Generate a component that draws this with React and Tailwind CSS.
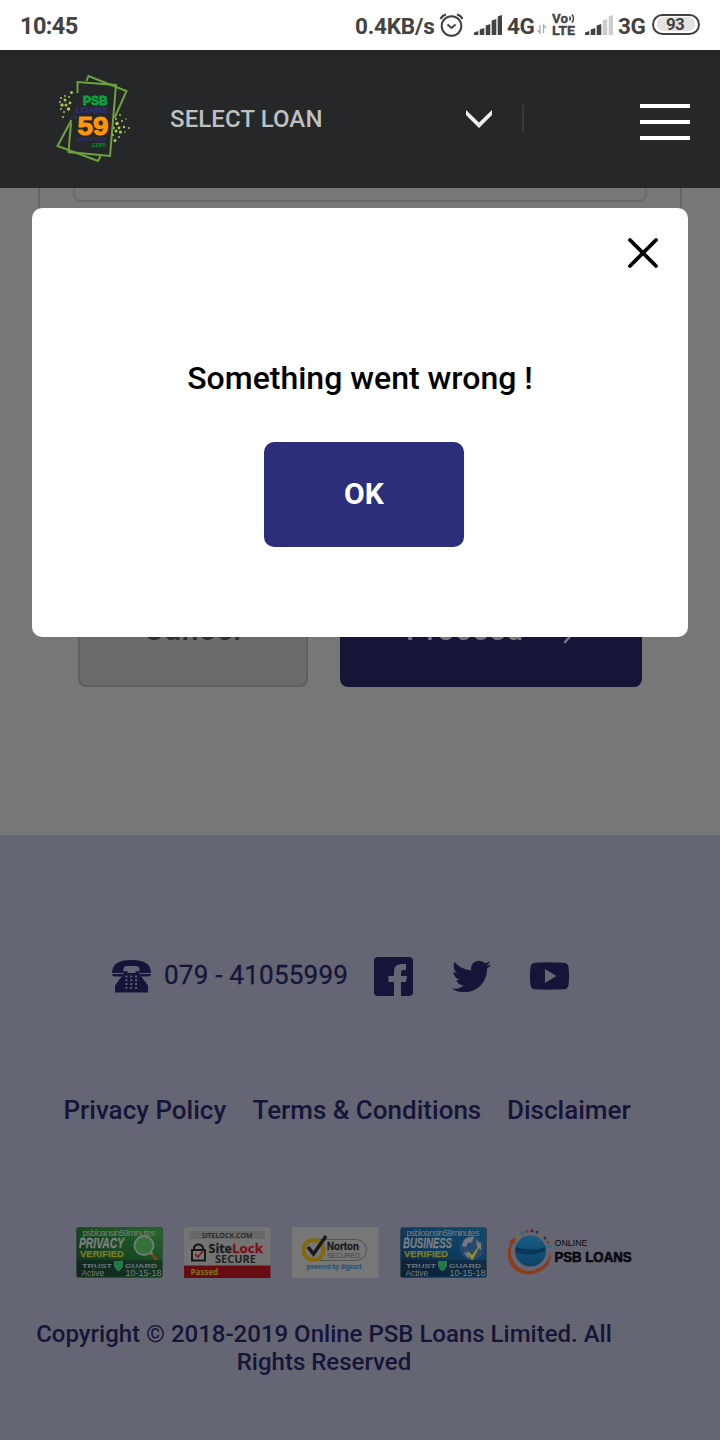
import React from "react";
import { FaTwitter } from "react-icons/fa";

const ROBOTO = "Roboto, 'Liberation Sans', sans-serif";

function Signal({ faded = 0 }) {
  const bars = [[0, 16, 4], [6, 13, 7], [12, 9, 11], [18, 4, 16], [24, 0, 20]];
  return (
    <svg width="28" height="20" viewBox="0 0 28 20" className="shrink-0">
      {bars.map(([x, y, h], i) => (
        <path key={x} d={`M${x - 0.3} ${y + 1.5}L${x + 4.3} ${y}V20H${x - 0.3}Z`} fill={i >= 5 - faded ? "#cccccc" : "#424242"} />
      ))}
    </svg>
  );
}

function StatusBar() {
  return (
    <div className="flex h-[50px] items-center bg-white pt-[3px] pl-5 pr-5 text-[22.5px] font-bold leading-none text-[#424242]">
      <span className="w-[335px] text-[23.5px] tracking-[-0.6px]">10:45</span>
      <span className="w-[84px] whitespace-nowrap tracking-[-0.2px]">0.4KB/s</span>
      <svg width="26" height="26" viewBox="0 0 26 26" className="-mt-[4px] shrink-0" fill="none" stroke="#424242" strokeWidth="2">
        <circle cx="12.500" cy="14" r="9.800" />
        <path d="M8.500 12.500 12.500 16l4-3.500M1.500 7Q3 3.500 7 2.500M18 2.500Q22 3.500 23.500 7" />
      </svg>
      <div className="-mt-[4px] ml-[9px] flex shrink-0"><Signal /></div>
      <span className="ml-[5px] w-[28px] tracking-[-0.3px]">4G</span>
      <svg width="10" height="12" viewBox="0 0 10 12" className="mt-[5px] ml-[2px] shrink-0" fill="none" stroke="#aaa" strokeWidth="1.300">
        <path d="M3 2v8L.5 7M6.500 10V2L9 5" />
      </svg>
      <svg width="25" height="25" viewBox="0 0 25 25" className="-mt-[5px] ml-[5px] shrink-0" fill="#424242" fontFamily={ROBOTO} fontWeight="700" stroke="#424242" strokeWidth=".3">
        <text x="0" y="10.500" fontSize="12.500" textLength="16" lengthAdjust="spacingAndGlyphs">Vo</text>
        <path d="M17.500 4.500q1.600 2 0 4M20 2.500q3 4 0 8" fill="none" stroke="#424242" strokeWidth="1.500" />
        <text x="0" y="22.500" fontSize="13" textLength="23" lengthAdjust="spacingAndGlyphs">LTE</text>
      </svg>
      <div className="-mt-[4px] ml-[8px] flex shrink-0"><Signal faded={2} /></div>
      <span className="ml-[5px] w-[28px] tracking-[-0.3px]">3G</span>
      <div className="-mt-[5px] ml-[6px] flex h-[21px] w-[48px] shrink-0 items-center justify-center rounded-full border-2 border-[#424242]">
        <div className="flex h-[14px] w-[38px] items-center justify-center rounded-full bg-[#e2e2e2] pt-px pr-[2px] text-[17px] tracking-[-0.8px]">93</div>
      </div>
    </div>
  );
}

function BrandLogo() {
  const dots = [[31.500, 32.500, 1.500], [29, 37, 1], [25, 36, 1], [21, 38, 1], [20, 42, 1], [25, 40, 1.500], [30, 43, 1.400], [22, 45, 1.700], [26, 45, 1.500], [28.500, 49, 1.800], [21, 49, 1], [24, 52, 1], [23, 57, 1], [80, 55, 1], [76, 59, 1], [86, 59, 0.800], [77, 63.500, 1.800], [82, 61, 1], [74, 68, 1], [79, 68, 1.400], [84, 67, 1.200], [89, 68, 1], [76, 71, 1.500], [80.500, 72, 1.600], [85, 72, 0.800], [73, 75, 1], [79, 77, 1], [75, 80.500, 1.500]];
  return (
    <svg width="120" height="115" viewBox="0 0 120 115" className="-mt-[3px] shrink-0">
      <g fill="none" stroke="#6ea23f" strokeWidth="2">
        <path d="M37.500 33V22L76 25 70 96 28.500 92 31 63" />
        <path d="M46.500 21 48.500 16 86.500 31 74.500 58M31.500 60 17.500 86 58 101 60.500 96" />
      </g>
      {dots.map(([x, y, r], i) => <circle key={i} cx={x} cy={y} r={r} fill="#a9c84e" />)}
      <g fontFamily="'Liberation Sans', Arial, sans-serif" fontWeight="700">
        <text x="43" y="44.800" fontSize="12" textLength="24.500" lengthAdjust="spacingAndGlyphs" fill="#08a53b" stroke="#08a53b" strokeWidth=".8">PSB</text>
        <text x="35.500" y="52.500" fontSize="8.500" textLength="32" lengthAdjust="spacingAndGlyphs" fill="#2e2e75" stroke="#2e2e75" strokeWidth=".5">LOANS</text>
        <text x="31" y="59" fontSize="5.500" textLength="6" fill="#2e2e75">IN</text>
        <text x="37.500" y="74.500" fontSize="26" textLength="31" lengthAdjust="spacingAndGlyphs" fill="#ff950b" stroke="#ff950b" strokeWidth="1">59</text>
        <text x="37" y="80.500" fontSize="6" textLength="29" lengthAdjust="spacingAndGlyphs" fill="#2e2e75">MINUTES</text>
        <text x="50" y="87" fontSize="7.500" fontWeight="400" textLength="16" lengthAdjust="spacingAndGlyphs" fill="#08a53b">.com</text>
      </g>
    </svg>
  );
}

function Header() {
  return (
    <header className="flex h-[138px] items-center bg-[#252729] pl-10 pr-[30px]">
      <BrandLogo />
      <span className="ml-[10px] w-[295px] whitespace-nowrap text-[24px] font-medium leading-none tracking-[0.1px] text-[#bfc0c0]">SELECT LOAN</span>
      <svg width="28" height="20" viewBox="0 0 28 20" className="mt-[2px] shrink-0">
        <path d="M1 0 14 12.500 27 0V5L14 18 1 5Z" fill="#eeeeee" />
      </svg>
      <div className="ml-[29px] h-7 w-[2px] bg-[#36383a]" />
      <div className="mt-[6px] ml-auto flex w-[50px] flex-col gap-3">
        <div className="h-1 bg-white" />
        <div className="h-1 bg-white" />
        <div className="h-1 bg-white" />
      </div>
    </header>
  );
}

function Telephone() {
  return (
    <svg width="40" height="34" viewBox="0 0 40 34" className="mt-[2px] shrink-0">
      <g fill="#161539">
        <path d="M0 13Q0 0 19.500 0T39 13H27.500V9.500Q27.500 6 24 6H15Q11.500 6 11.500 9.500V13Z" />
        <path d="M0 14H11.200Q10.800 16.500 8.500 16.500H3Q.3 16.500 0 14ZM28 14H39Q38.700 16.500 36 16.500H30.500Q28.200 16.500 28 14Z" />
        <path d="M11.500 11.200h4V13h8v-1.800h4V14L36 25.500v7H3v-7L11.500 14Z" />
      </g>
      {[0, 1, 2, 3].flatMap((r) => [0, 1, 2].map((c) => (
        <rect key={`${r}-${c}`} x={13.5 + c * 4.8} y={15.5 + r * 3.8} width="1.900" height="1.900" fill="#646673" />
      )))}
    </svg>
  );
}

function TrustBadge({ kind }) {
  const green = kind === "PRIVACY";
  const id = `badge-${kind}`;
  return (
    <svg width="88" height="52" viewBox="0 0 88 52" fontFamily="'Liberation Sans', Arial, sans-serif">
      <defs>
        <linearGradient id={id} x1="0" y1="1" x2="1" y2="0">
          <stop offset="0" stopColor={green ? "#122c19" : "#0a2542"} />
          <stop offset=".55" stopColor={green ? "#174b20" : "#0d3c60"} />
          <stop offset="1" stopColor={green ? "#28672d" : "#124a6c"} />
        </linearGradient>
      </defs>
      <rect x=".5" y=".5" width="86" height="50" rx="2" fill={`url(#${id})`} stroke="#343d40" strokeWidth=".7" />
      <path d="M1 33H86V49H1Z" fill="#101b25" opacity=".45" />
      <text x="6.500" y="8.700" fontSize="8.800" textLength="73" fill="#788081">psbloansin59minutes</text>
      <text x="3" y="21" fontSize="14.500" fontWeight="700" fontStyle="italic" textLength={green ? 45 : 49} lengthAdjust="spacingAndGlyphs" fill="#7b7f80" stroke="#7b7f80" strokeWidth=".4">{kind}</text>
      <text x="4" y="29.800" fontSize="8.500" fontWeight="700" textLength="44" lengthAdjust="spacingAndGlyphs" fill="#797c28" stroke="#797c28" strokeWidth=".25">VERIFIED</text>
      {green ? (
        <g fill="none">
          <circle cx="68" cy="18.500" r="9.500" fill="#35713a" stroke="#727c77" strokeWidth="1.800" />
          <path d="m74.500 25.500 2 2" stroke="#777" strokeWidth="3" />
          <path d="m76 27 5 5.500" stroke="#79451f" strokeWidth="3" />
        </g>
      ) : (
        <g>
          <circle cx="72" cy="21" r="12" fill="#28496f" />
          <path d="M64 13q6-4 10-3l-2 5-4 1-2 4-4-1ZM76 13l5 4v6l-4-3ZM64 25l5 1 1 5-3-1Z" fill="#737a82" />
          <path d="m67 23 5 5 10-13-10 19Z" fill="#92901f" />
        </g>
      )}
      <g fontSize="5.500" fontWeight="700" fill="#6f7677">
        <text x="6" y="40.500" textLength="30" lengthAdjust="spacingAndGlyphs">TRUST</text>
        <text x="49" y="40.500" textLength="32" lengthAdjust="spacingAndGlyphs">GUARD</text>
      </g>
      <path d="M38.500 34.500q4 .5 8-.5v5q-1 3-4 5-3-2-4-5Z" fill="#168044" stroke="#5b776a" strokeWidth=".7" />
      <g fontSize="9" fill="#7a8182">
        <text x="5.500" y="48.700" textLength="22.500" lengthAdjust="spacingAndGlyphs">Active</text>
        <text x="49.500" y="48.700" textLength="36" lengthAdjust="spacingAndGlyphs">10-15-18</text>
      </g>
    </svg>
  );
}

function SiteLockBadge() {
  return (
    <svg width="88" height="52" viewBox="0 0 88 52" fontFamily="'Open Sans', sans-serif" fontWeight="700">
      <rect width="86.500" height="51" rx="1.500" fill="#747474" />
      <rect x="5" y="4" width="76" height="8" fill="#686868" />
      <text x="17.500" y="10.500" fontSize="7" fontWeight="600" textLength="51" lengthAdjust="spacingAndGlyphs" fill="#222">SITELOCK.COM</text>
      <path d="M10 23v-1q0-4.500 4.500-4.500t4.500 4.500v1" fill="none" stroke="#171717" strokeWidth="2" />
      <rect x="8" y="23" width="13" height="10.500" fill="#777" stroke="#171717" strokeWidth="2" />
      <path d="m11 27 3 3 5-6" fill="none" stroke="#871016" strokeWidth="1.700" />
      <text x="24.500" y="25.500" fontSize="13" textLength="23.500" lengthAdjust="spacingAndGlyphs" fill="#1d1d1d" stroke="#1d1d1d" strokeWidth=".3">Site</text>
      <text x="48" y="25.500" fontSize="13" textLength="31" lengthAdjust="spacingAndGlyphs" fill="#7e1017" stroke="#7e1017" strokeWidth=".3">Lock</text>
      <text x="31" y="35.700" fontSize="10.500" textLength="41" lengthAdjust="spacingAndGlyphs" fill="#222">SECURE</text>
      <path d="M0 38.500H86.500V51H0Z" fill="#690c12" />
      <text x="6.500" y="47.500" fontSize="8" textLength="28" lengthAdjust="spacingAndGlyphs" fill="#817320">Passed</text>
    </svg>
  );
}

function NortonBadge() {
  return (
    <svg width="88" height="52" viewBox="0 0 88 52" fontFamily="'Liberation Sans', Arial, sans-serif">
      <rect width="86.500" height="51" fill="#777" />
      <path d="M27 12.500H64a10.500 10.500 0 0 1 0 21H27" fill="none" stroke="#484848" strokeWidth=".8" />
      <circle cx="21.500" cy="23" r="10" fill="#777" stroke="#82690b" strokeWidth="4" />
      <path d="m16 20 5.500 7L34 9" fill="none" stroke="#181a1c" strokeWidth="3.500" />
      <text x="35" y="23" fontSize="11.500" fontWeight="700" textLength="32" lengthAdjust="spacingAndGlyphs" fill="#18191b" stroke="#18191b" strokeWidth=".3">Norton</text>
      <text x="35" y="31" fontSize="7" textLength="33" fill="#454545">SECURED</text>
      <text x="14.500" y="42" fontSize="7" fontWeight="700" textLength="55" lengthAdjust="spacingAndGlyphs" fill="#174d70">powered by digicert</text>
    </svg>
  );
}

function OnlineLogo() {
  const dots = [[9.800, 9.500, "#6c7c20"], [14.500, 6, "#157481"], [19, 4.500, "#83401b"], [24, 3.800, "#5f1737"], [29, 5, "#203276"], [33.500, 7.500, "#7b7420"], [37, 11, "#51206b"], [40, 15, "#83401b"], [42, 19.500, "#157481"]];
  return (
    <svg width="126" height="52" viewBox="0 0 126 52">
      <defs>
        <linearGradient id="globe" x1="0" y1="0" x2="0" y2="1"><stop offset="0" stopColor="#185c86" /><stop offset="1" stopColor="#0c4268" /></linearGradient>
      </defs>
      <circle cx="22.500" cy="24" r="15.500" fill="url(#globe)" />
      <path d="M7.500 20v5q14 6 29-1 1.500-2 1-4Q25 25 7.500 20Z" fill="#0b3759" />
      <path d="M1 14 6.800 10.500 7 17 5 16Q-1 29 9 39q10 9 22 2 10-5 12-16 1 13-10 19-15 8-27-2Q-5 31 3 15Z" fill="#8e3b17" />
      {dots.map(([x, y, c]) => <circle key={x} cx={x} cy={y} r="1.500" fill={c} />)}
      <g fontFamily="'Liberation Sans', Arial, sans-serif" fill="#0a0a10">
        <text x="46.500" y="19" fontSize="8.500" textLength="33" lengthAdjust="spacingAndGlyphs">ONLINE</text>
        <text x="46.500" y="34.500" fontSize="14" fontWeight="700" textLength="77" lengthAdjust="spacingAndGlyphs" stroke="#0a0a10" strokeWidth=".7">PSB LOANS</text>
      </g>
    </svg>
  );
}

function Footer() {
  return (
    <footer className="h-[605px] overflow-hidden bg-[#646673] font-medium text-[#161539]">
      <div className="mt-[120px] ml-[112px] flex h-[42px] items-center">
        <Telephone />
        <span className="-mt-px ml-3 w-[184px] whitespace-nowrap text-[26px] font-normal tracking-[0.24px] [-webkit-text-stroke:0.3px]">079 - 41055999</span>
        <svg width="39" height="39" viewBox="0 0 39 39" className="ml-[26px] shrink-0">
          <path fill="#161539" d="M4 0H35Q39 0 39 4V35Q39 39 35 39H27V25H32L33 19H27V15.500Q27 13 29.500 13H32V7H27Q20 7.500 20 14V19H14.500V25H20V39H4Q0 39 0 35V4Q0 0 4 0Z" />
        </svg>
        <FaTwitter className="ml-[39px] size-[39px] shrink-0" />
        <svg width="39" height="28" viewBox="0 0 39 28" className="ml-[39px] shrink-0">
          <path fill="#161539" fillRule="evenodd" d="M5 .7Q19.500-.3 34 .7 38 1 38.500 5 39.500 14 38.500 23 38 27 34 27.300 19.500 28.200 5 27.300 1 27 .5 23-.5 14 .5 5 1 1 5 .7ZM15 7V21L26.500 14Z" />
        </svg>
      </div>
      <nav className="mt-[95px] ml-[63.5px] flex h-9 items-center whitespace-nowrap text-[26px] leading-9">
        <span className="w-[189px]">Privacy Policy</span>
        <span className="w-[254.5px]">Terms &amp; Conditions</span>
        <span>Disclaimer</span>
      </nav>
      <div className="mt-[99px] ml-[76px] flex gap-5">
        <TrustBadge kind="PRIVACY" />
        <SiteLockBadge />
        <NortonBadge />
        <TrustBadge kind="BUSINESS" />
        <OnlineLogo />
      </div>
      <p className="mt-[41px] ml-6 w-[600px] text-center text-[24px] leading-7">Copyright © 2018-2019 Online PSB Loans Limited. All<br />Rights Reserved</p>
    </footer>
  );
}

function Dialog() {
  return (
    <div role="dialog" className="absolute top-[208px] left-8 flex h-[429px] w-[656px] flex-col items-center rounded-[10px] bg-white">
      <svg width="32" height="32" viewBox="0 0 32 32" className="mt-[29px] mr-[29px] self-end" fill="none" stroke="#000" strokeWidth="3.800" strokeLinecap="round">
        <path d="m3 3 26 26M29 3l-26 26" />
      </svg>
      <p className="mt-[89px] h-10 whitespace-nowrap text-[32px] font-medium leading-10 text-black">Something went wrong !</p>
      <button className="mt-[44px] ml-2 h-[105px] w-[200px] rounded-[10px] bg-[#2d2e79] pb-[2px] text-[30px] font-bold text-white">OK</button>
    </div>
  );
}

export default function App() {
  return (
    <div className="relative h-[1440px] w-[720px] overflow-hidden font-[Roboto,'Liberation_Sans',sans-serif]">
      <StatusBar />
      <Header />
      <main className="flex h-[647px] flex-col bg-[#777]">
        <div className="mx-[38px] h-[300px] border-x-2 border-[#646464] px-[33px]">
          <div className="h-[14px] rounded-b-[8px] border-x-2 border-b-2 border-[#696b6b]" />
        </div>
        <div className="mt-[89px] ml-[78px] flex gap-8">
          <div className="flex h-[110px] w-[230px] items-center justify-center rounded-[8px] border-2 border-[#5f5f5f] bg-[#6b6b6b] pb-[5px] text-[30px] font-medium tracking-[1px] text-[#2f2f2f]">Cancel</div>
          <div className="flex h-[110px] w-[302px] items-center rounded-[8px] bg-[#151637] pb-[5px] pl-[66px] text-[30px] font-medium tracking-[1px] text-[#777]">
            <span className="w-[147px]">Proceed</span>
            <svg width="24" height="30" viewBox="0 0 24 30" fill="none" stroke="#777" strokeWidth="2.600" strokeLinecap="round"><path d="M11 4 22 16 12 27" /></svg>
          </div>
        </div>
      </main>
      <Footer />
      <Dialog />
    </div>
  );
}
